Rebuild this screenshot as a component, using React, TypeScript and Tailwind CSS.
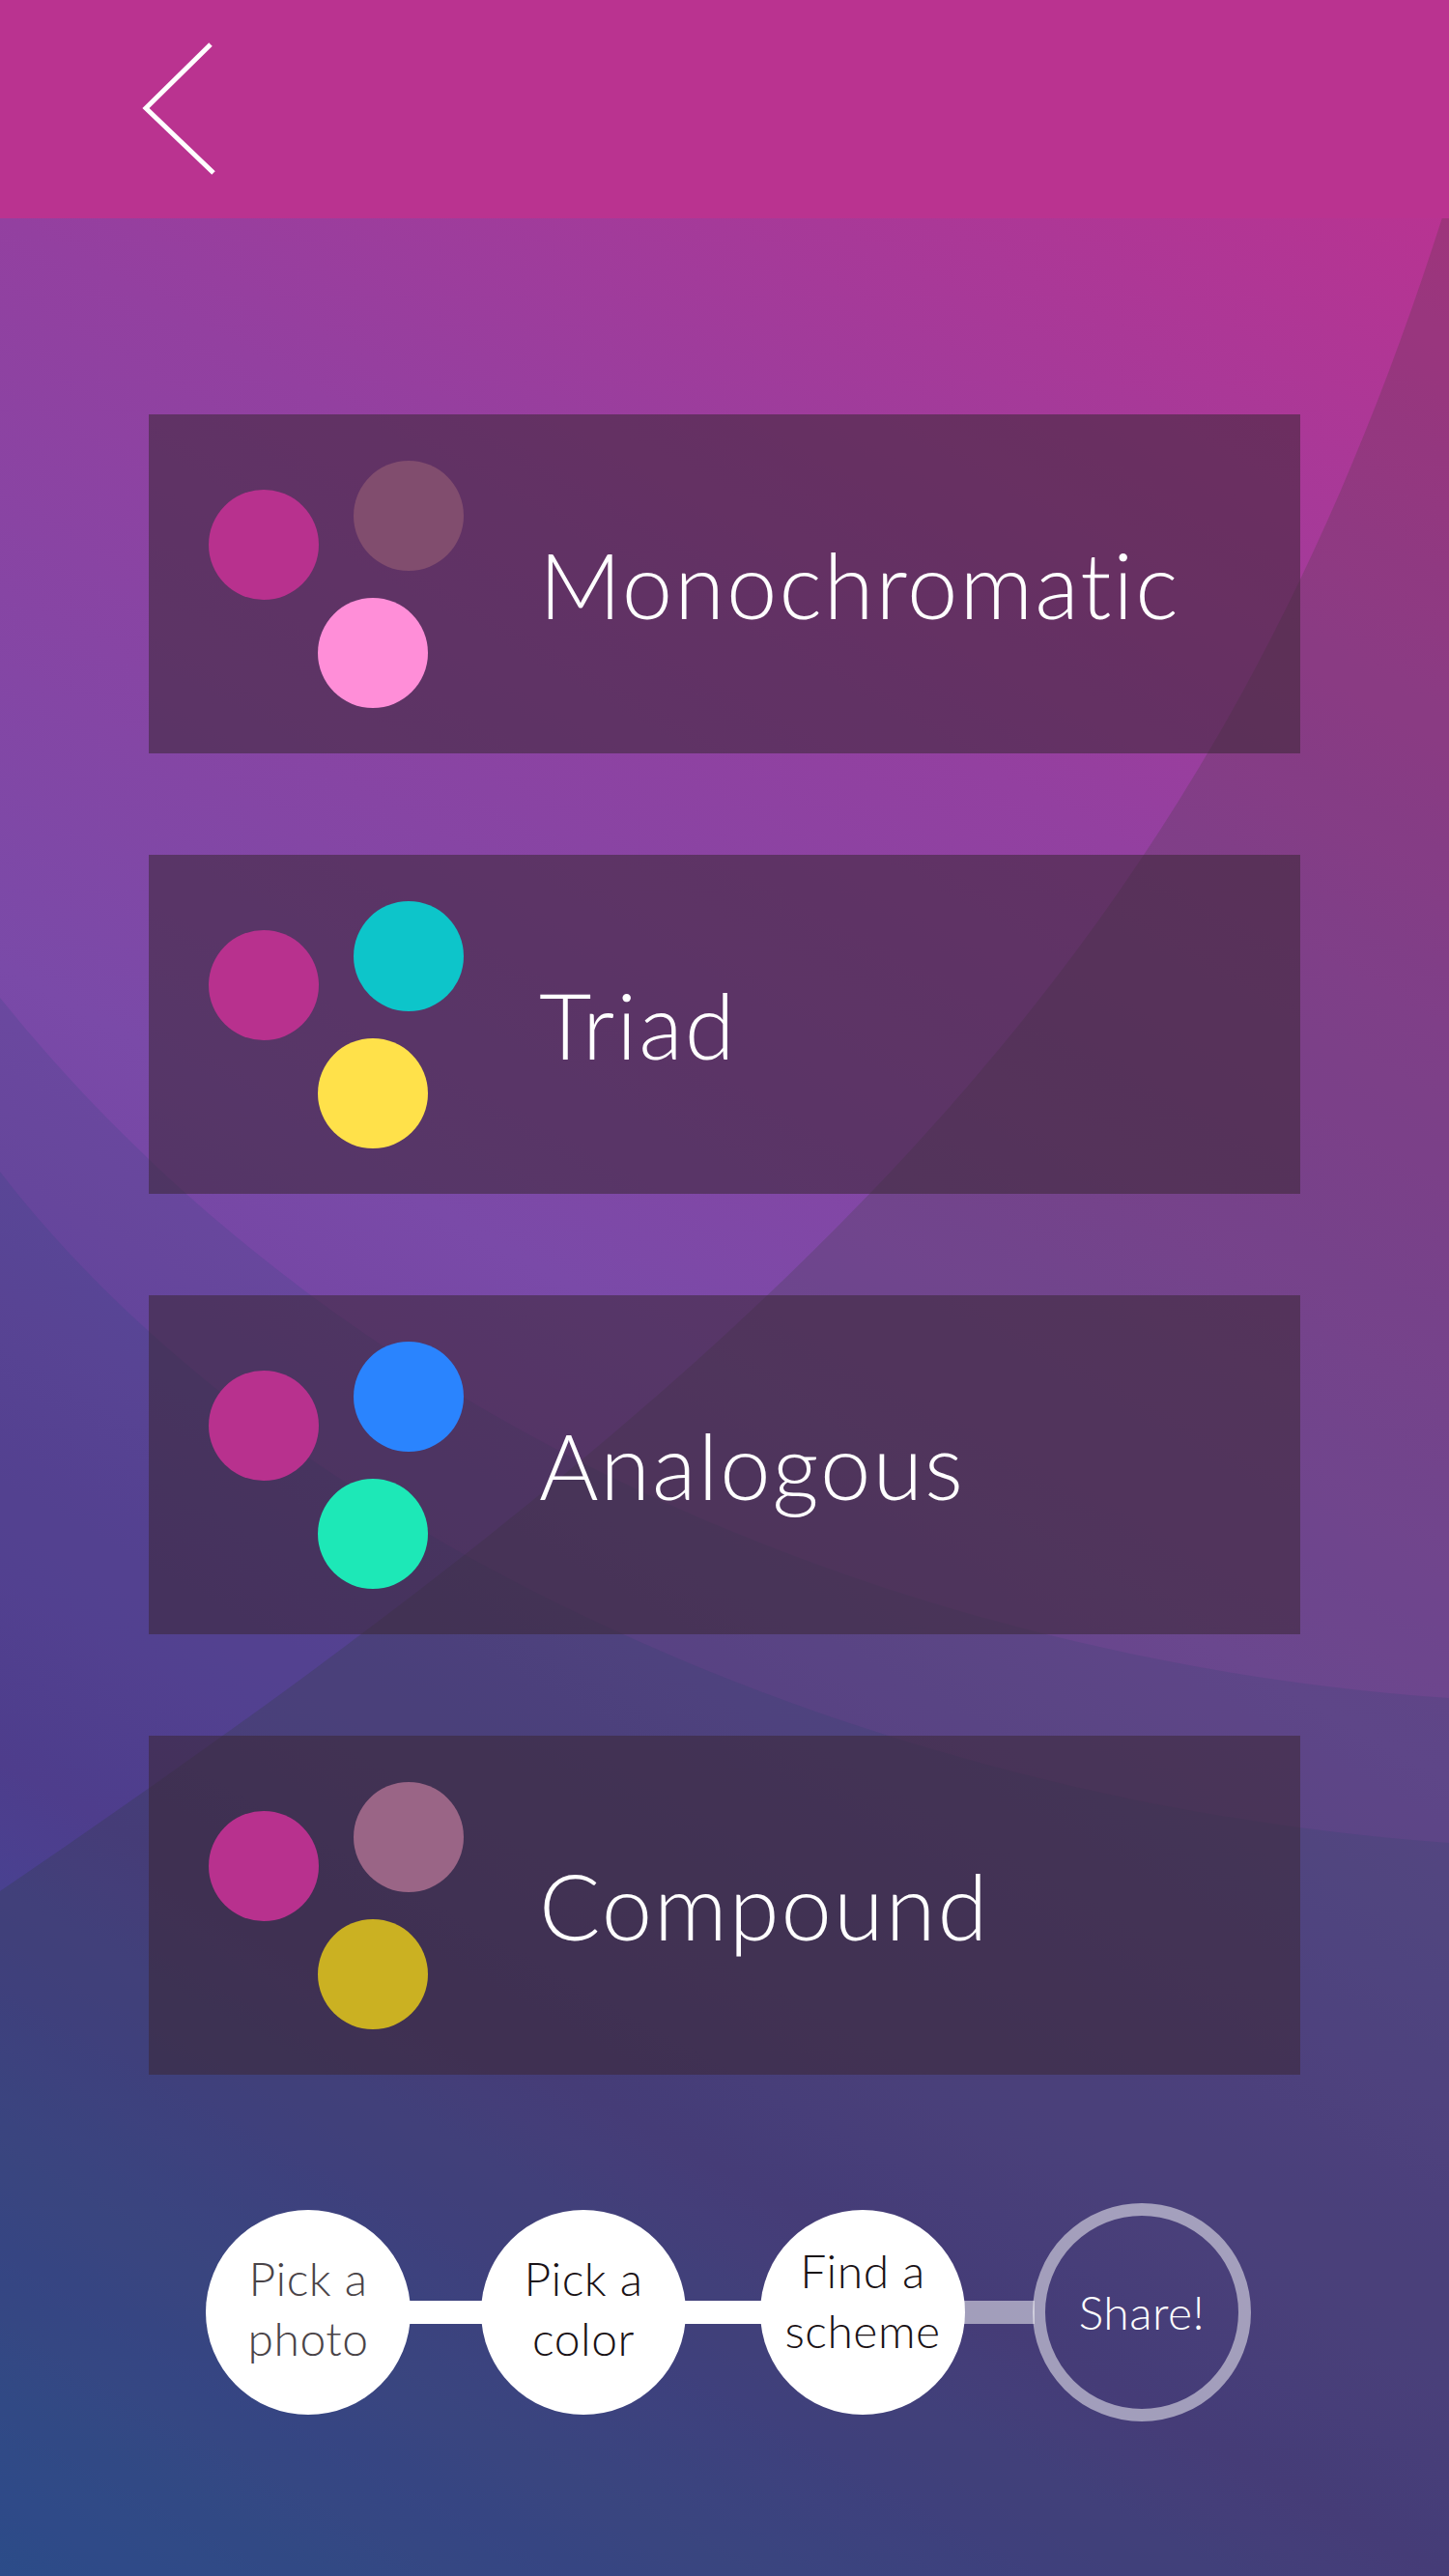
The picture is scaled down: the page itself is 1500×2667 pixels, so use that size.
import React from "react";

type Scheme = {
  name: string;
  colors: [string, string, string];
};

const schemes: Scheme[] = [
  { name: "Monochromatic", colors: ["#b8318e", "#814d6e", "#ff8ed8"] },
  { name: "Triad", colors: ["#b8318e", "#0dc5ca", "#ffe14a"] },
  { name: "Analogous", colors: ["#b8318e", "#2a84fe", "#1de8b7"] },
  { name: "Compound", colors: ["#b8318e", "#9a6586", "#cbb122"] },
];

const Background = () => (
  <svg
    className="absolute inset-0 h-full w-full"
    viewBox="0 0 1500 2667"
    preserveAspectRatio="none"
  >
    <defs>
      <linearGradient
        id="pageBg"
        gradientUnits="userSpaceOnUse"
        x1="1500"
        y1="0"
        x2="0"
        y2="2667"
      >
        <stop offset="0" stopColor="#c2308e" />
        <stop offset="0.304" stopColor="#9340a0" />
        <stop offset="0.525" stopColor="#7a4aa8" />
        <stop offset="0.76" stopColor="#633b97" />
        <stop offset="1" stopColor="#3a54b4" />
      </linearGradient>
    </defs>
    <rect width="1500" height="2667" fill="url(#pageBg)" />
    {/* soft arcs */}
    <path
      d="M0 1033 C399 1528 1016 1725 1500 1758 V2667 H0 Z"
      fill="#144a6e"
      fillOpacity="0.14"
    />
    <path
      d="M0 1213 C288 1587 888 1865 1500 1908 V2667 H0 Z"
      fill="#144a6e"
      fillOpacity="0.14"
    />
    <path
      d="M1500 203 C1270 940 887 1355 0 1958 V2667 H1500 Z"
      fill="#1e3a14"
      fillOpacity="0.17"
    />
  </svg>
);

const Dots = ({ colors }: { colors: [string, string, string] }) => (
  <svg width="264" height="256" viewBox="0 0 264 256" className="shrink-0">
    <circle cx="57" cy="87" r="57" fill={colors[0]} />
    <circle cx="207" cy="57" r="57" fill={colors[1]} />
    <circle cx="170" cy="199" r="57" fill={colors[2]} />
  </svg>
);

const SchemeCard = ({ scheme }: { scheme: Scheme }) => (
  <button className="flex h-[351px] w-[1192px] items-center bg-[rgba(59,40,53,0.56)] pl-[62px] text-left">
    <Dots colors={scheme.colors} />
    <span className="ml-[78px] text-[94px] font-light leading-none tracking-[2px] text-white">
      {scheme.name}
    </span>
  </button>
);

const Connector = ({ light, width }: { light?: boolean; width: string }) => (
  <div
    className={`-mx-[2px] h-[24px] ${width} ${light ? "bg-white/50" : "bg-white"}`}
  />
);

const Stepper = () => (
  <div className="flex items-center justify-center pl-[8px]">
    <div className="relative z-10 flex h-[212px] w-[212px] items-center justify-center rounded-full bg-white">
      <span className="pb-[8px] text-center text-[48px] font-light leading-[62px] tracking-[0.5px] text-[#4a4448]">
        Pick a
        <br />
        photo
      </span>
    </div>
    <Connector width="w-[77px]" />
    <div className="relative z-10 flex h-[212px] w-[212px] items-center justify-center rounded-full bg-white">
      <span className="pb-[8px] text-center text-[48px] font-light leading-[62px] tracking-[0.5px] text-[#1a1216]">
        Pick a
        <br />
        color
      </span>
    </div>
    <Connector width="w-[81px]" />
    <div className="relative z-10 flex h-[212px] w-[212px] items-center justify-center rounded-full bg-white">
      <span className="pb-[24px] text-center text-[48px] font-light leading-[62px] tracking-[0.5px] text-[#1a1216]">
        Find a
        <br />
        scheme
      </span>
    </div>
    <Connector light width="w-[74px]" />
    <div className="relative z-10 flex h-[226px] w-[226px] items-center justify-center rounded-full border-[13px] border-white/50">
      <span className="text-[48px] font-light leading-none tracking-[0.5px] text-white">
        Share!
      </span>
    </div>
  </div>
);

export default function App() {
  return (
    <div className="relative h-[2667px] w-full overflow-hidden font-['Lato',_'Liberation_Sans',_sans-serif]">
      <Background />

      <header className="relative flex h-[226px] items-center bg-[#ba3390] pl-[146px]">
        <button aria-label="Back">
          <svg width="80" height="140" viewBox="0 0 80 140" fill="none">
            <polyline
              points="72,3 5,69 75,136"
              stroke="white"
              strokeWidth="5"
              strokeLinejoin="miter"
            />
          </svg>
        </button>
      </header>

      <main className="relative flex flex-col items-center gap-[105px] pt-[203px]">
        {schemes.map((scheme) => (
          <SchemeCard key={scheme.name} scheme={scheme} />
        ))}
      </main>

      <div className="relative mt-[133px]">
        <Stepper />
      </div>
    </div>
  );
}
